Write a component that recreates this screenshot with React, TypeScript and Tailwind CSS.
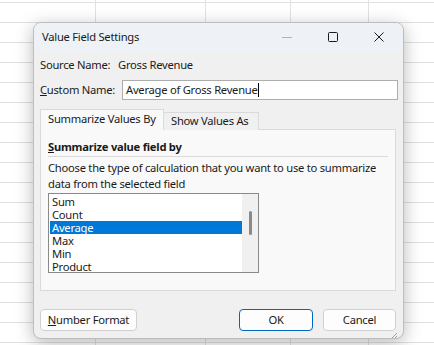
import React from 'react'

const ITEMS = ['Sum', 'Count', 'Average', 'Max', 'Min', 'Product']

// Window controls: minimize (disabled), maximize, close
function MinIcon(): React.ReactElement {
  return (
    <svg width="10" height="10" viewBox="0 0 10 10" aria-hidden="true">
      <line x1="0" y1="5.5" x2="10" y2="5.5" stroke="#b4b4b4" strokeWidth="1" />
    </svg>
  )
}

function MaxIcon(): React.ReactElement {
  return (
    <svg width="10" height="10" viewBox="0 0 10 10" aria-hidden="true">
      <rect x="0.5" y="0.5" width="9" height="9" rx="1" fill="none" stroke="#1a1a1a" strokeWidth="1" />
    </svg>
  )
}

function CloseIcon(): React.ReactElement {
  return (
    <svg width="10" height="10" viewBox="0 0 10 10" aria-hidden="true">
      <path d="M0.5 0.5L9.5 9.5M9.5 0.5L0.5 9.5" stroke="#1a1a1a" strokeWidth="1" />
    </svg>
  )
}

// Resize grip in the lower right corner
function GripIcon(): React.ReactElement {
  return (
    <svg width="8" height="8" viewBox="0 0 8 8" aria-hidden="true">
      <path d="M7 2L2 7M7 5L5 7" stroke="#a0a0a0" strokeWidth="1" />
    </svg>
  )
}

export default function App(): React.ReactElement {
  return (
    <div
      className={[
        'relative w-[434px] h-[345px] overflow-hidden bg-white text-[11.2px] tracking-[-0.25px] text-[#1a1a1a] whitespace-nowrap',
        "font-['Noto_Sans',sans-serif]",
        'bg-[linear-gradient(to_right,transparent_95px,#e1e1e1_95px,#e1e1e1_96px,transparent_96px,transparent_205px,#e1e1e1_205px,#e1e1e1_206px,transparent_206px,transparent_290px,#e1e1e1_290px,#e1e1e1_291px,transparent_291px,transparent_368px,#e1e1e1_368px,#e1e1e1_369px,transparent_369px),repeating-linear-gradient(to_bottom,transparent_0,transparent_2px,#e1e1e1_2px,#e1e1e1_3px,transparent_3px,transparent_20px)]',
      ].join(' ')}
    >
      {/* Dialog window */}
      <div className="absolute left-[33px] top-[22px] w-[371px] h-[317px] flex flex-col rounded-[8px] overflow-hidden border border-[#bdbdbd] bg-[#f0f0f0] shadow-[0_4px_18px_rgba(0,0,0,0.28)]">
        {/* Title bar */}
        <div className="h-[29px] shrink-0 flex items-center bg-[#eef1f6] pl-[8px] pb-[1px]">
          <span className="flex-1 leading-none">Value Field Settings</span>
          <div className="flex items-center">
            <span className="w-[46px] flex justify-center"><MinIcon /></span>
            <span className="w-[46px] flex justify-center"><MaxIcon /></span>
            <span className="w-[46px] flex justify-center mr-[1px]"><CloseIcon /></span>
          </div>
        </div>

        {/* Body */}
        <div className="flex-1 flex flex-col pl-[6px] pr-[5px]">
          {/* Source name */}
          <div className="mt-[6px] h-[14px] shrink-0 flex items-center">
            <span className="w-[78px] shrink-0">Source Name:</span>
            <span>Gross Revenue</span>
          </div>

          {/* Custom name */}
          <div className="mt-[8px] h-[20px] shrink-0 flex items-center">
            <span className="w-[82px] shrink-0"><u>C</u>ustom Name:</span>
            <div className="flex-1 h-[20px] flex items-center bg-white border border-[#adadad] pl-[3px]">
              <span>Average of Gross Revenue</span>
              <span className="w-[1px] h-[14px] bg-black" />
            </div>
          </div>

          {/* Tabs */}
          <div className="mt-[9px] flex items-end h-[21px] shrink-0 -mb-[1px] relative z-10">
            <div className="w-[124px] h-[21px] flex items-center pl-[7px] pb-[2px] bg-[#f9f9f9] border border-b-0 border-[#dadada]">
              Summarize Values By
            </div>
            <div className="w-[95px] h-[18px] flex items-center pl-[7px] bg-[#f0f0f0] border border-l-0 border-b-0 border-[#dadada]">
              Show Values As
            </div>
          </div>

          {/* Tab panel */}
          <div className="mr-[2px] h-[162px] shrink-0 flex flex-col bg-[#f9f9f9] border border-[#dadada] pl-[7px] pr-[7px]">
            <div className="mt-[9px] h-[16px] flex items-center font-bold">
              <span><u>S</u>ummarize value field by</span>
            </div>
            <div className="mt-[1px] h-[1px] bg-[#d9d9d9]" />
            <div className="mt-[3px] leading-[16px]">
              <p>Choose the type of calculation that you want to use to summarize</p>
              <p>data from the selected field</p>
            </div>

            {/* List box */}
            <div className="mt-[1px] w-[211px] h-[80px] flex bg-white border border-[#8a8a8a]">
              <div className="flex-1 flex flex-col pt-[1px] pl-[1px]">
                {ITEMS.map((item) => (
                  <div
                    key={item}
                    className={[
                      'h-[13px] flex items-center pl-[2px] leading-[13px]',
                      item === 'Average' ? 'bg-[#0078d7] text-white' : '',
                    ].join(' ')}
                  >
                    {item}
                  </div>
                ))}
              </div>
              <div className="w-[16px] bg-[#f0f0f0] flex justify-center pt-[17px]">
                <div className="w-[3px] h-[24px] rounded-full bg-[#8a8a8a] ml-[1px]" />
              </div>
            </div>
          </div>

          {/* Buttons */}
          <div className="mt-[18px] shrink-0 flex items-center">
            <button
              type="button"
              className="w-[97px] h-[22px] rounded-[4px] bg-[#fdfdfd] border border-[#d0d0d0] flex items-center justify-center"
            >
              <span><u>N</u>umber Format</span>
            </button>
            <div className="flex-1" />
            <button
              type="button"
              className="w-[74px] h-[22px] rounded-[4px] bg-[#fdfdfd] border border-[#0067c0] flex items-center justify-center"
            >
              OK
            </button>
            <button
              type="button"
              className="ml-[10px] mr-[2px] w-[73px] h-[22px] rounded-[4px] bg-[#fdfdfd] border border-[#d0d0d0] flex items-center justify-center"
            >
              Cancel
            </button>
          </div>
          <div className="flex-1 flex justify-end items-end pb-[1px]">
            <GripIcon />
          </div>
        </div>
      </div>
    </div>
  )
}
